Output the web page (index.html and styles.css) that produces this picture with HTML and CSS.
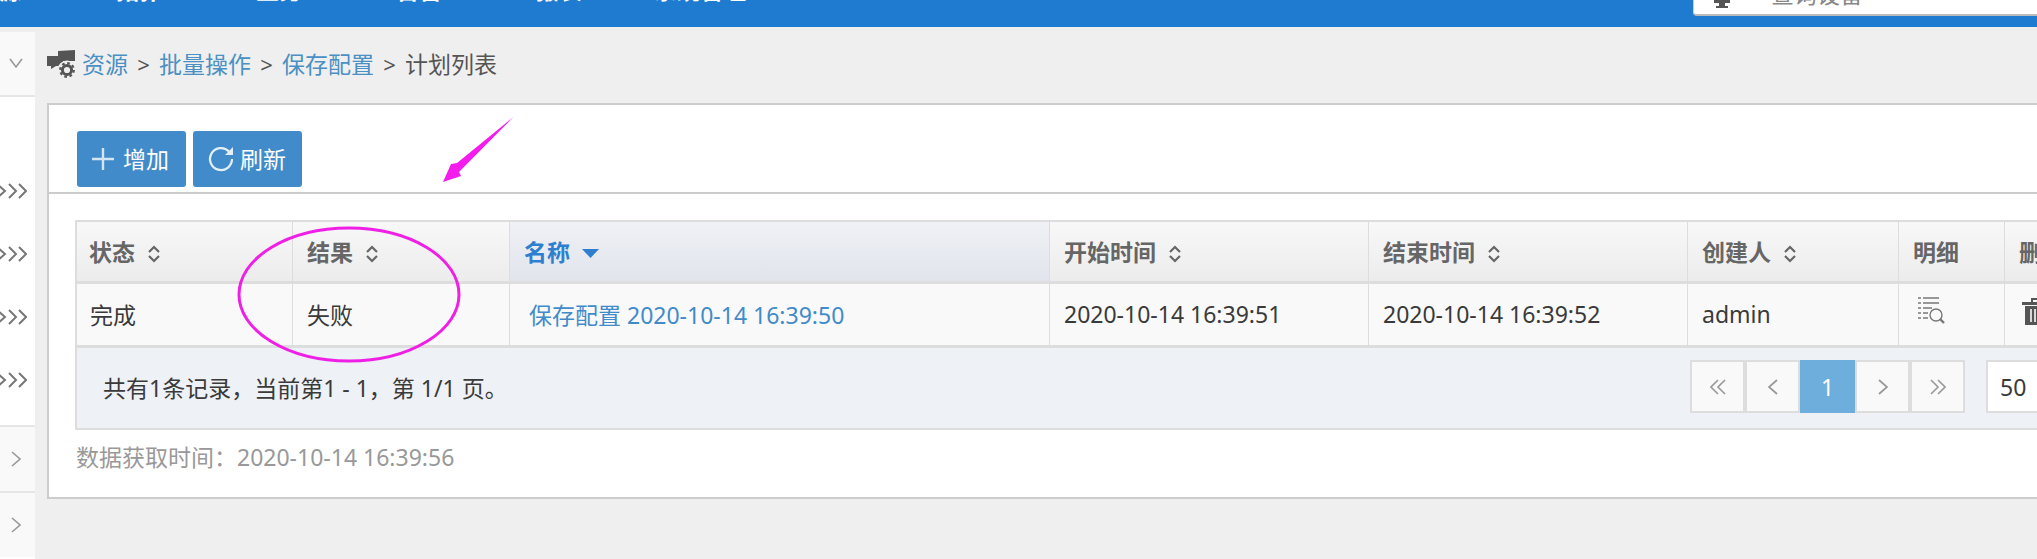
FILE: index.html
```html
<!DOCTYPE html>
<html lang="zh">
<head>
<meta charset="utf-8">
<title>计划列表</title>
<link rel="stylesheet" href="styles.css">
</head>
<body>
<header class="topbar">
  <nav class="nav">
    <a>资源</a><a>拓扑</a><a>业务</a><a>告警</a><a>报表</a><a class="nav-last">系统管理</a>
  </nav>
  <div class="search">
    <svg class="search-icon" width="16" height="24" viewBox="0 0 16 24"><rect x="0" y="0" width="16" height="19" fill="#555"/><rect x="5" y="19" width="6" height="3" fill="#555"/><rect x="2" y="22" width="12" height="2" fill="#555"/></svg>
    <span>查询设备</span>
  </div>
</header>
<div class="layout">
  <aside class="sidebar">
    <div class="side-head"><svg width="16" height="12" viewBox="0 0 16 12"><polyline points="2,2 8,10 14,2" fill="none" stroke="#999" stroke-width="1.6"/></svg></div>
    <div class="side-list">
      <div class="side-row"><svg width="27" height="18" viewBox="0 0 27 18"><g fill="none" stroke="#777" stroke-width="2"><polyline points="-3,2 5,9 -3,16"/><polyline points="9,2 16,9 9,16"/><polyline points="19,2 26,9 19,16"/></g></svg></div>
      <div class="side-row"><svg width="27" height="18" viewBox="0 0 27 18"><g fill="none" stroke="#777" stroke-width="2"><polyline points="-3,2 5,9 -3,16"/><polyline points="9,2 16,9 9,16"/><polyline points="19,2 26,9 19,16"/></g></svg></div>
      <div class="side-row"><svg width="27" height="18" viewBox="0 0 27 18"><g fill="none" stroke="#777" stroke-width="2"><polyline points="-3,2 5,9 -3,16"/><polyline points="9,2 16,9 9,16"/><polyline points="19,2 26,9 19,16"/></g></svg></div>
      <div class="side-row"><svg width="27" height="18" viewBox="0 0 27 18"><g fill="none" stroke="#777" stroke-width="2"><polyline points="-3,2 5,9 -3,16"/><polyline points="9,2 16,9 9,16"/><polyline points="19,2 26,9 19,16"/></g></svg></div>
    </div>
    <div class="side-item"><svg width="10" height="16" viewBox="0 0 10 16"><polyline points="1,1 9,8 1,15" fill="none" stroke="#999" stroke-width="1.6"/></svg></div>
    <div class="side-item"><svg width="10" height="16" viewBox="0 0 10 16"><polyline points="1,1 9,8 1,15" fill="none" stroke="#999" stroke-width="1.6"/></svg></div>
  </aside>
  <main class="content">
    <div class="crumbs">
      <svg class="crumb-icon" width="28" height="28" viewBox="0 0 28 28">
        <path d="M11 1 L28 0 V11 H11 Z" fill="#555"/>
        <path d="M0 6 H16 V16 H9 L4 19 V16 H0 Z" fill="#555"/>
        <circle cx="20" cy="20" r="9.5" fill="#efefef"/>
        <circle cx="20" cy="20" r="4.6" fill="none" stroke="#555" stroke-width="3"/>
        <circle cx="20" cy="20" r="6.8" fill="none" stroke="#555" stroke-width="2.2" stroke-dasharray="2.7 2.64"/>
      </svg>
      <a class="crumb-link">资源</a><span class="crumb-sep">&gt;</span><a class="crumb-link">批量操作</a><span class="crumb-sep">&gt;</span><a class="crumb-link">保存配置</a><span class="crumb-sep">&gt;</span><span class="crumb-current">计划列表</span>
    </div>
    <section class="panel">
      <div class="toolbar">
        <button class="btn btn-add">
          <svg width="22" height="22" viewBox="0 0 22 22"><path d="M11 0 V22 M0 11 H22" stroke="#d3e4f3" stroke-width="2.4" fill="none"/></svg>
          <span>增加</span>
        </button>
        <button class="btn btn-refresh">
          <svg width="26" height="26" viewBox="0 0 26 26"><path d="M21 5.5 A11 11 0 1 0 24 13" stroke="#e4eff8" stroke-width="2.2" fill="none"/><path d="M25 1 V9 H17 Z" fill="#e4eff8"/></svg>
          <span>刷新</span>
        </button>
      </div>
      <div class="panel-body">
        <table class="grid">
          <colgroup><col class="c1"><col class="c2"><col class="c3"><col class="c4"><col class="c5"><col class="c6"><col class="c7"><col class="c8"></colgroup>
          <thead>
            <tr>
              <th>状态<svg class="sort" width="14" height="18" viewBox="0 0 14 18"><path d="M2 7 L7 2 L12 7 M2 11 L7 16 L12 11" fill="none" stroke="#666" stroke-width="2.2"/></svg></th>
              <th>结果<svg class="sort" width="14" height="18" viewBox="0 0 14 18"><path d="M2 7 L7 2 L12 7 M2 11 L7 16 L12 11" fill="none" stroke="#666" stroke-width="2.2"/></svg></th>
              <th class="sorted">名称<svg class="sort-down" width="17" height="9" viewBox="0 0 17 9"><path d="M0 0 H17 L8.5 9 Z" fill="#2e7fd0"/></svg></th>
              <th>开始时间<svg class="sort" width="14" height="18" viewBox="0 0 14 18"><path d="M2 7 L7 2 L12 7 M2 11 L7 16 L12 11" fill="none" stroke="#666" stroke-width="2.2"/></svg></th>
              <th>结束时间<svg class="sort" width="14" height="18" viewBox="0 0 14 18"><path d="M2 7 L7 2 L12 7 M2 11 L7 16 L12 11" fill="none" stroke="#666" stroke-width="2.2"/></svg></th>
              <th>创建人<svg class="sort" width="14" height="18" viewBox="0 0 14 18"><path d="M2 7 L7 2 L12 7 M2 11 L7 16 L12 11" fill="none" stroke="#666" stroke-width="2.2"/></svg></th>
              <th>明细</th>
              <th>删除</th>
            </tr>
          </thead>
          <tbody>
            <tr>
              <td>完成</td>
              <td>失败</td>
              <td><a class="row-link">保存配置 2020-10-14 16:39:50</a></td>
              <td>2020-10-14 16:39:51</td>
              <td>2020-10-14 16:39:52</td>
              <td>admin</td>
              <td class="icon-cell">
                <svg width="28" height="28" viewBox="0 0 28 28"><g fill="none" stroke="#777" stroke-width="1.4"><path d="M0 1 H3 M5 1 H21 M0 6 H3 M5 6 H21 M0 11 H3 M5 11 H14 M0 16 H3 M5 16 H10 M0 21 H3 M5 21 H10"/><circle cx="18" cy="18" r="6"/><path d="M22 22 L26 26" stroke-width="2.4"/></g></svg>
              </td>
              <td class="icon-cell">
                <svg width="28" height="28" viewBox="0 0 28 28"><path d="M0 5 H26 V8 H0 Z M9 1 H17 V5 H15 V3 H11 V5 H9 Z" fill="#555"/><path d="M3 9 H23 V28 H3 Z" fill="#555"/><path d="M9 12 V25 M13 12 V25 M17 12 V25" stroke="#f9f9f9" stroke-width="1.6"/></svg>
              </td>
            </tr>
          </tbody>
        </table>
        <div class="grid-foot">
          <div class="foot-info">共有1条记录，当前第1 - 1，第 1/1 页。</div>
          <ul class="pager">
            <li class="page"><svg width="16" height="16" viewBox="0 0 16 16"><path d="M8 1 L1 8 L8 15 M15 1 L8 8 L15 15" fill="none" stroke="#999" stroke-width="1.6"/></svg></li>
            <li class="page"><svg width="10" height="16" viewBox="0 0 10 16"><path d="M9 1 L1 8 L9 15" fill="none" stroke="#999" stroke-width="1.8"/></svg></li>
            <li class="page page-active">1</li>
            <li class="page"><svg width="10" height="16" viewBox="0 0 10 16"><path d="M1 1 L9 8 L1 15" fill="none" stroke="#999" stroke-width="1.8"/></svg></li>
            <li class="page"><svg width="16" height="16" viewBox="0 0 16 16"><path d="M1 1 L8 8 L1 15 M8 1 L15 8 L8 15" fill="none" stroke="#999" stroke-width="1.6"/></svg></li>
          </ul>
          <div class="page-size">50</div>
        </div>
        <p class="fetch-time">数据获取时间：2020-10-14 16:39:56</p>
      </div>
    </section>
  </main>
</div>
<svg class="marks" width="2037" height="559" viewBox="0 0 2037 559">
  <ellipse cx="349" cy="294.5" rx="110" ry="66.5" fill="none" stroke="#ef1fe6" stroke-width="3"/>
  <polygon points="513.5,117 457,163 451,164 443,182 461,176 459,172" fill="#f41cec"/>
</svg>
</body>
</html>
```

FILE: styles.css
```css
* { box-sizing: border-box; }
html, body { margin: 0; padding: 0; height: 559px; overflow: hidden; }
body {
  position: relative;
  width: 2037px;
  background: #efefef;
  color: #3a3a3a;
  font-family: "Noto Sans", "Noto Sans CJK SC", sans-serif;
  font-size: 23px;
}
a { color: #428bca; text-decoration: none; }

.topbar {
  display: flex;
  height: 27px;
  background: #1f7bd0;
  overflow: hidden;
}
.nav {
  display: flex;
  flex: none;
  gap: 94px;
  width: 1717px;
  margin: -25px 0 0 -24px;
  font-weight: 700;
  line-height: 30px;
}
.nav a { color: #fff; }
.nav .nav-last { margin-left: -22px; }
.search {
  display: flex;
  flex: none;
  align-items: flex-end;
  gap: 41px;
  width: 400px;
  height: 40px;
  margin-top: -24px;
  padding-left: 20px;
  background: #fff;
  border: 1px solid #ccc;
  border-bottom: 2px solid #bbb;
  border-radius: 4px;
  color: #888;
  line-height: 26px;
}
.search span { margin-bottom: 7px; }
.search-icon { margin-bottom: 6px; }

.layout { display: flex; height: 532px; }
.sidebar {
  flex: none;
  width: 35px;
  margin-top: 5px;
  background: #fff;
}
.side-head {
  display: flex;
  align-items: center;
  height: 65px;
  padding: 0 0 2px 8px;
  background: #f9f9f9;
  border-bottom: 2px solid #e6e6e6;
}
.side-list {
  height: 328px;
  padding-top: 62px;
}
.side-row {
  display: flex;
  align-items: center;
  height: 63px;
}
.side-item {
  display: flex;
  align-items: center;
  height: 66px;
  padding-left: 11px;
  background: #f9f9f9;
  border-top: 2px solid #e6e6e6;
}

.content { flex: none; width: 2300px; padding-left: 12px; }
.crumbs {
  display: flex;
  align-items: center;
  height: 76px;
  padding-bottom: 3px;
  color: #555;
  line-height: 30px;
}
.crumb-icon { margin-right: 7px; }
.crumb-link { color: #4a90c4; }
.crumb-sep { width: 31px; text-align: center; color: #555; font-size: 22px; }
.crumb-current { color: #555; }

.panel {
  height: 396px;
  background: #fff;
  border: 2px solid #ccc;
  border-right: 0;
}
.toolbar {
  display: flex;
  gap: 7px;
  height: 89px;
  padding: 26px 0 0 28px;
  border-bottom: 2px solid #ccc;
}
.btn {
  display: flex;
  align-items: center;
  height: 56px;
  width: 109px;
  padding: 0;
  border: 0;
  border-radius: 3px;
  background: #428bca;
  color: #fff;
  font: inherit;
  line-height: 30px;
}
.btn-add { gap: 9px; padding-left: 15px; }
.btn-refresh { gap: 6px; padding-left: 15px; }

.panel-body { padding: 26px 0 0 26px; }
.grid {
  width: 2240px;
  table-layout: fixed;
  border-collapse: separate;
  border-spacing: 0;
  border: 2px solid #ddd;
  border-bottom: 0;
  border-right: 0;
}
.c1 { width: 216px; }
.c2 { width: 217px; }
.c3 { width: 540px; }
.c4 { width: 319px; }
.c5 { width: 319px; }
.c6 { width: 211px; }
.c7 { width: 106px; }
.c8 { width: 310px; }
.grid th, .grid td {
  padding: 0 0 0 14px;
  border-right: 1px solid #ddd;
  text-align: left;
  white-space: nowrap;
  overflow: hidden;
}
.grid th:first-child { padding-left: 12px; }
.grid td:first-child { padding-left: 13px; }
.grid th {
  height: 62px;
  padding-bottom: 2px;
  border-bottom: 3px solid #ddd;
  background: linear-gradient(#f8f8f8, #ececec);
  color: #666;
  font-weight: 700;
}
.grid th.sorted {
  background: linear-gradient(#eff1f5, #e1e4ec);
  color: #2e7fd0;
}
.grid td {
  height: 64px;
  padding-bottom: 2px;
  border-bottom: 3px solid #ddd;
  background: #f9f9f9;
  color: #3a3a3a;
}
.grid td.icon-cell { padding-left: 19px; padding-bottom: 8px; line-height: 0; }
.grid td.icon-cell + td.icon-cell { padding-left: 17px; }
.row-link { margin-left: 5px; }
.sort { margin-left: 12px; vertical-align: -2px; }
.sort-down { margin-left: 12px; vertical-align: 3px; }

.grid-foot {
  display: flex;
  align-items: center;
  width: 2240px;
  height: 82px;
  padding-bottom: 3px;
  background: #eef1f6;
  border: 2px solid #ddd;
  border-top: 0;
  border-right: 0;
}
.foot-info { flex: 0 0 1613px; padding-left: 26px; color: #3a3a3a; }
.pager {
  display: flex;
  flex: none;
  margin: 0;
  padding: 0;
  list-style: none;
}
.page {
  display: flex;
  align-items: center;
  justify-content: center;
  width: 55px;
  height: 53px;
  background: #f9f9f9;
  border: 2px solid #ddd;
}
.page-active {
  background: #6eaedc;
  border-color: #6eaedc;
  color: #fff;
}
.page-size {
  display: flex;
  align-items: center;
  flex: none;
  width: 120px;
  height: 53px;
  margin-left: 21px;
  padding-left: 12px;
  background: #fff;
  border: 2px solid #ddd;
  color: #3a3a3a;
}
.fetch-time {
  margin: 11px 0 0 1px;
  color: #999;
  line-height: 32px;
}

.marks { position: absolute; top: 0; left: 0; pointer-events: none; }
```
